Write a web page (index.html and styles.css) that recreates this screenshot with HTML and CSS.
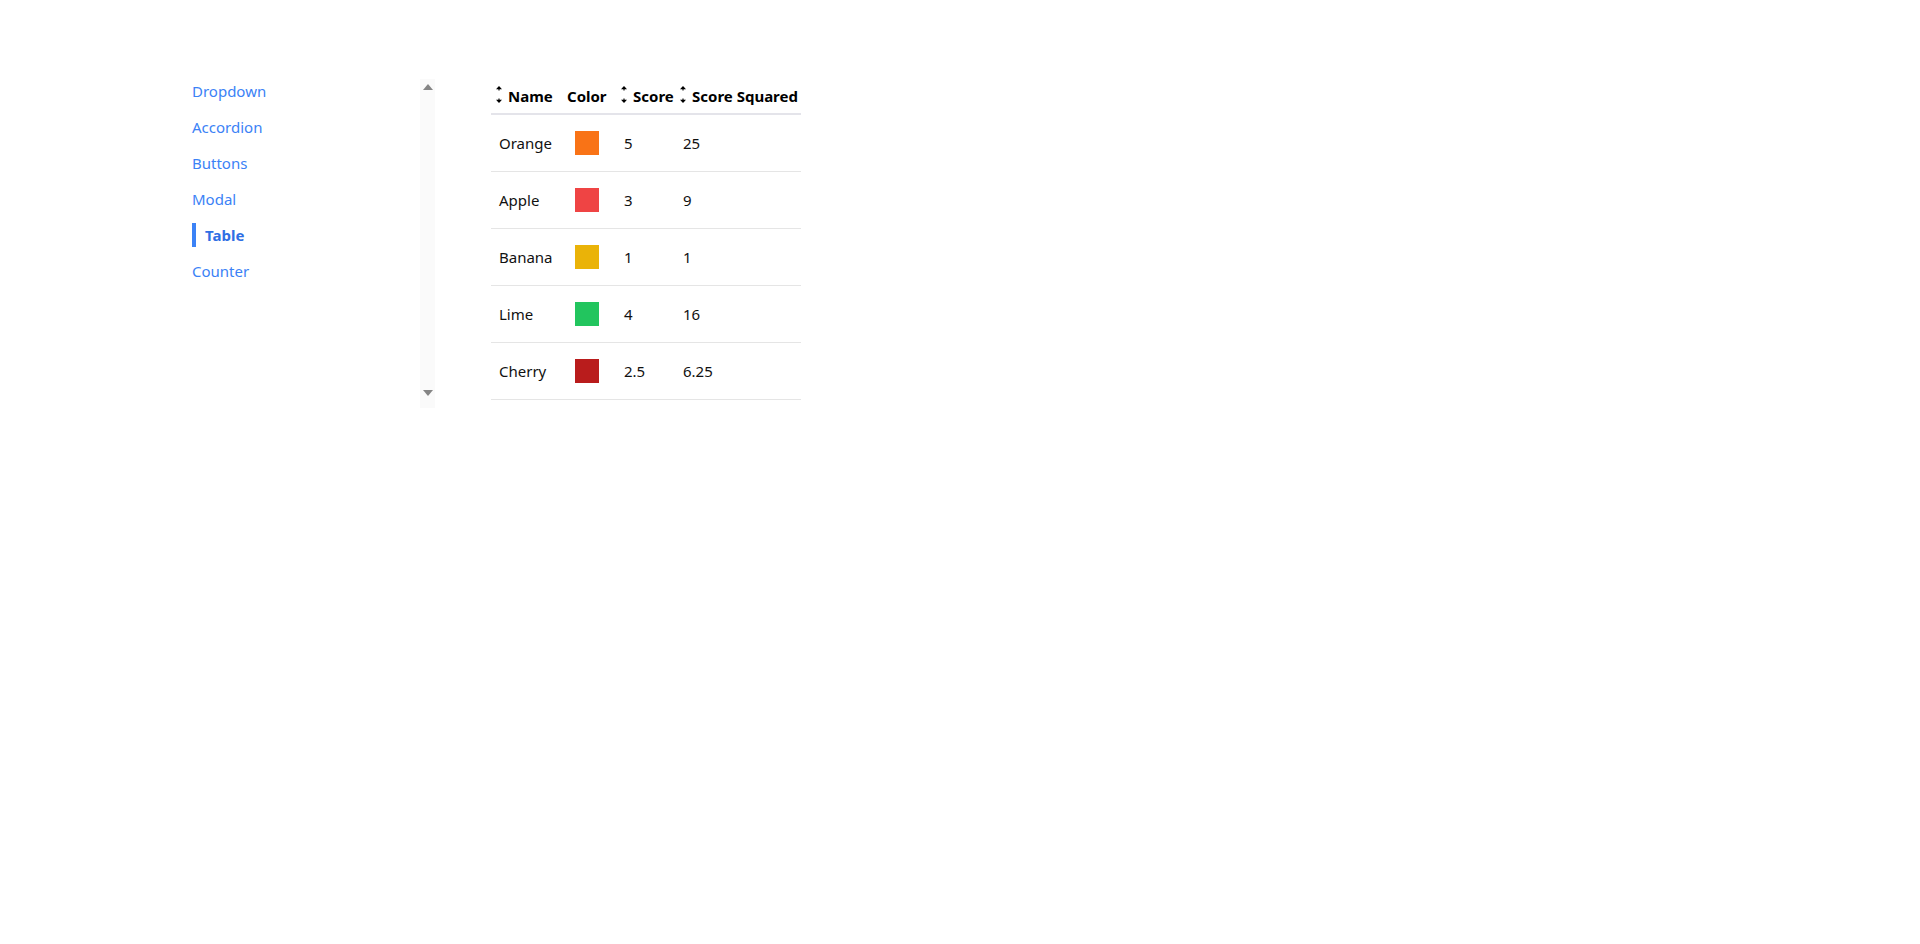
FILE: index.html
```html
<!DOCTYPE html>
<html lang="en">
<head>
<meta charset="utf-8">
<title>Table</title>
<link rel="stylesheet" href="styles.css">
</head>
<body>
<div class="page">
  <aside class="sidebar">
    <nav class="nav">
      <a class="nav-item" href="#">Dropdown</a>
      <a class="nav-item" href="#">Accordion</a>
      <a class="nav-item" href="#">Buttons</a>
      <a class="nav-item" href="#">Modal</a>
      <a class="nav-item active" href="#">Table</a>
      <a class="nav-item" href="#">Counter</a>
    </nav>
    <div class="scrolltrack">
      <span class="arrow-up"></span>
      <span class="arrow-down"></span>
    </div>
  </aside>
  <main class="content">
    <table class="fruit-table">
      <colgroup>
        <col class="c-name">
        <col class="c-color">
        <col class="c-score">
        <col class="c-sq">
      </colgroup>
      <thead>
        <tr>
          <th><div class="th-inner"><svg class="sort" viewBox="0 0 6 17" width="6" height="17"><polygon points="3,0 6,3.2 0,3.2" /><rect x="2.3" y="3.2" width="1.4" height="1.2" /><rect x="2.3" y="12.6" width="1.4" height="1.2" /><polygon points="0,13.8 6,13.8 3,17" /></svg>Name</div></th>
          <th><div class="th-inner">Color</div></th>
          <th><div class="th-inner"><svg class="sort" viewBox="0 0 6 17" width="6" height="17"><polygon points="3,0 6,3.2 0,3.2" /><rect x="2.3" y="3.2" width="1.4" height="1.2" /><rect x="2.3" y="12.6" width="1.4" height="1.2" /><polygon points="0,13.8 6,13.8 3,17" /></svg>Score</div></th>
          <th><div class="th-inner"><svg class="sort" viewBox="0 0 6 17" width="6" height="17"><polygon points="3,0 6,3.2 0,3.2" /><rect x="2.3" y="3.2" width="1.4" height="1.2" /><rect x="2.3" y="12.6" width="1.4" height="1.2" /><polygon points="0,13.8 6,13.8 3,17" /></svg>Score Squared</div></th>
        </tr>
      </thead>
      <tbody>
        <tr><td>Orange</td><td class="swatch-cell"><span class="swatch orange"></span></td><td>5</td><td>25</td></tr>
        <tr><td>Apple</td><td class="swatch-cell"><span class="swatch apple"></span></td><td>3</td><td>9</td></tr>
        <tr><td>Banana</td><td class="swatch-cell"><span class="swatch banana"></span></td><td>1</td><td>1</td></tr>
        <tr><td>Lime</td><td class="swatch-cell"><span class="swatch lime"></span></td><td>4</td><td>16</td></tr>
        <tr><td>Cherry</td><td class="swatch-cell"><span class="swatch cherry"></span></td><td>2.5</td><td>6.25</td></tr>
      </tbody>
    </table>
  </main>
</div>
</body>
</html>
```

FILE: styles.css
```css
* { box-sizing: border-box; }

html, body {
  margin: 0;
  padding: 0;
  background: #ffffff;
}

body {
  font-family: "Noto Sans", "Open Sans", sans-serif;
  font-size: 16px;
  color: #111111;
}

.page {
  display: flex;
  align-items: flex-start;
  padding: 79px 0 0 192px;
  gap: 56px;
}

.sidebar {
  display: flex;
  width: 243px;
  height: 329px;
}

.nav {
  flex: 1;
  display: flex;
  flex-direction: column;
  gap: 12px;
}

.nav-item {
  display: block;
  line-height: 24px;
  height: 24px;
  color: #3b82f6;
  text-decoration: none;
  font-size: 15px;
  white-space: nowrap;
}

.nav-item.active {
  color: #2f6fe4;
  font-weight: 700;
  border-left: 4px solid #3b82f6;
  padding-left: 9px;
}

.scrolltrack {
  width: 15px;
  height: 100%;
  background: #fafafa;
  display: flex;
  flex-direction: column;
  justify-content: space-between;
  align-items: center;
  padding: 5px 0 12px;
}

.arrow-up {
  width: 0;
  height: 0;
  border-left: 5px solid transparent;
  border-right: 5px solid transparent;
  border-bottom: 6px solid #858585;
}

.arrow-down {
  width: 0;
  height: 0;
  border-left: 5px solid transparent;
  border-right: 5px solid transparent;
  border-top: 6px solid #858585;
}

.fruit-table {
  border-collapse: collapse;
  table-layout: fixed;
  width: 310px;
}

.c-name { width: 68px; }
.c-color { width: 57px; }
.c-score { width: 59px; }
.c-sq { width: 126px; }

.fruit-table th {
  text-align: left;
  font-weight: 700;
  font-size: 15px;
  line-height: 21px;
  height: 35px;
  padding: 7px 0 5px 8px;
  border-bottom: 2px solid #e4e4ea;
  white-space: nowrap;
  color: #000;
  vertical-align: top;
}

.th-inner {
  display: flex;
  align-items: center;
  height: 21px;
}

.sort {
  display: block;
  flex: none;
  align-self: flex-start;
  margin-left: -3px;
  margin-right: 6px;
  fill: #000;
  overflow: visible;
}

.fruit-table td {
  padding: 16px 0 16px 8px;
  line-height: 24px;
  font-size: 15px;
  border-bottom: 1px solid #e5e5e5;
  vertical-align: middle;
  white-space: nowrap;
}

.fruit-table td.swatch-cell {
  padding-left: 16px;
}

.swatch {
  display: block;
  width: 24px;
  height: 24px;
}

.orange { background: #f97316; }
.apple { background: #ef4444; }
.banana { background: #eab308; }
.lime { background: #22c55e; }
.cherry { background: #b91c1c; }
```
